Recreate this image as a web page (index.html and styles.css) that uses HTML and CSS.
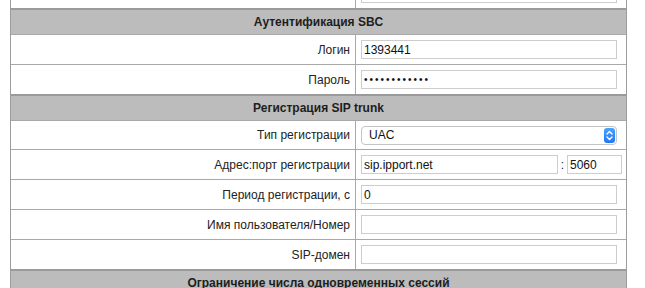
FILE: index.html
```html
<!DOCTYPE html>
<html lang="ru">
<head>
<meta charset="utf-8">
<title>SIP trunk</title>
<link rel="stylesheet" href="styles.css">
</head>
<body>
<div class="panel">
  <div class="row"><div class="lbl"></div><div class="val"><input class="inp" type="text"></div></div>
  <div class="hdr">Аутентификация SBC</div>
  <div class="row"><div class="lbl">Логин</div><div class="val"><input class="inp" type="text" value="1393441"></div></div>
  <div class="row"><div class="lbl">Пароль</div><div class="val"><input class="inp inp-pass" type="password" value="123456789012"></div></div>
  <div class="hdr">Регистрация SIP trunk</div>
  <div class="row row-sel"><div class="lbl">Тип регистрации</div><div class="val">
    <div class="sel"><span class="sel-text">UAC</span><span class="sel-btn"><svg width="11" height="15" viewBox="0 0 11 15"><path d="M3 6 L5.5 3.5 L8 6" fill="none" stroke="#fff" stroke-width="1.4" stroke-linecap="round" stroke-linejoin="round"/><path d="M3 9 L5.5 11.5 L8 9" fill="none" stroke="#fff" stroke-width="1.4" stroke-linecap="round" stroke-linejoin="round"/></svg></span></div>
  </div></div>
  <div class="row"><div class="lbl">Адрес:порт регистрации</div><div class="val"><input class="inp inp-addr" type="text" value="sip.ipport.net"><span class="colon">:</span><input class="inp inp-port" type="text" value="5060"></div></div>
  <div class="row"><div class="lbl">Период регистрации, с</div><div class="val"><input class="inp" type="text" value="0"></div></div>
  <div class="row"><div class="lbl">Имя пользователя/Номер</div><div class="val"><input class="inp" type="text"></div></div>
  <div class="row"><div class="lbl">SIP-домен</div><div class="val"><input class="inp" type="text"></div></div>
  <div class="hdr">Ограничение числа одновременных сессий</div>
</div>
</body>
</html>
```
FILE: styles.css
```css
html, body {
  margin: 0;
  background: #fff;
}
body {
  font-family: "Liberation Sans", Arial, sans-serif;
  font-size: 12px;
  color: #222;
  overflow: hidden;
}
.panel {
  margin: -21px 0 0 10px;
  width: 617px;
  box-sizing: border-box;
  border-left: 1px solid #9c9c9c;
  border-right: 1px solid #9c9c9c;
}
.row {
  display: grid;
  grid-template-columns: 345px 270px;
  height: 29px;
  border-top: 1px solid #a8a8a8;
}
.panel > .row:first-child,
.hdr + .row {
  border-top: 0;
}
.row-sel {
  height: 28px;
}
.lbl {
  box-sizing: border-box;
  border-right: 1px solid #a8a8a8;
  display: flex;
  align-items: center;
  justify-content: flex-end;
  padding-right: 5px;
}
.val {
  display: flex;
  align-items: center;
  padding-left: 5px;
}
.inp {
  box-sizing: border-box;
  width: 256px;
  height: 19px;
  border: 1px solid #cdcdcd;
  padding: 0 2px;
  margin: 0;
  font: 12px "Liberation Sans", Arial, sans-serif;
  color: #111;
  outline: none;
  background: #fff;
}
.inp-pass {
  font-size: 10px;
  letter-spacing: 2px;
}
.inp-addr {
  width: 197px;
}
.colon {
  width: 9px;
  text-align: center;
}
.inp-port {
  width: 55px;
}
.hdr {
  background: #bcbcbc;
  border-top: 2px solid #9a9a9a;
  border-bottom: 1px solid #a8a8a8;
  height: 24px;
  display: flex;
  align-items: center;
  justify-content: center;
  font-weight: bold;
  color: #1e1e1e;
}
.sel {
  box-sizing: border-box;
  width: 256px;
  height: 19px;
  border: 1px solid #c4c4c4;
  border-radius: 4px;
  display: flex;
  align-items: center;
  justify-content: space-between;
  padding-left: 7px;
  background: #fff;
  color: #111;
}
.sel-btn {
  display: flex;
  width: 11px;
  height: 15px;
  margin-right: 1px;
  border-radius: 3px;
  background: linear-gradient(#4aa3fc, #1f78f4);
}
```
